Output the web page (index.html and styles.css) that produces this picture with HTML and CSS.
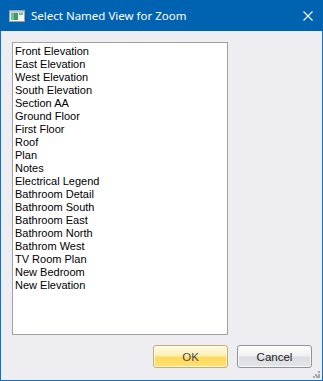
FILE: index.html
```html
<!DOCTYPE html>
<html lang="en">
<head>
  <meta charset="UTF-8">
  <title>Select Named View for Zoom</title>
  <link rel="stylesheet" href="styles.css">
</head>
<body>

<div class="dialog">
  <div class="titlebar">
    <svg class="app-icon" width="16" height="12" viewBox="0 0 16 12">
      <rect x="0.5" y="0.5" width="15" height="11" fill="#f4f4f4" stroke="#9aa3a8"/>
      <rect x="1" y="1" width="14" height="2" fill="#c9ced2"/>
      <rect x="2" y="3" width="7" height="7" fill="#3f9a6a"/>
      <rect x="2" y="3" width="3" height="7" fill="#6cbf8e"/>
      <rect x="10" y="3" width="4" height="2" fill="#7fb79a"/>
    </svg>
    <span class="title">Select Named View for Zoom</span>
    <svg class="close" width="10" height="10" viewBox="0 0 10 10">
      <path d="M0.5 0.5 L9.5 9.5 M9.5 0.5 L0.5 9.5" stroke="#fff" stroke-width="1.1"/>
    </svg>
  </div>

  <div class="content">
    <ul class="listbox">
      <li>Front Elevation</li>
      <li>East Elevation</li>
      <li>West Elevation</li>
      <li>South Elevation</li>
      <li>Section AA</li>
      <li>Ground Floor</li>
      <li>First Floor</li>
      <li>Roof</li>
      <li>Plan</li>
      <li>Notes</li>
      <li>Electrical Legend</li>
      <li>Bathroom Detail</li>
      <li>Bathroom South</li>
      <li>Bathroom East</li>
      <li>Bathroom North</li>
      <li>Bathrom West</li>
      <li>TV Room Plan</li>
      <li>New Bedroom</li>
      <li>New Elevation</li>
    </ul>

    <div class="buttons">
      <button class="btn btn-ok">OK</button>
      <button class="btn">Cancel</button>
    </div>
  </div>

  <svg class="grip" width="7" height="7" viewBox="0 0 7 7">
    <rect x="5" y="0" width="2" height="2" fill="#a6a6ad"/>
    <rect x="2" y="3" width="2" height="2" fill="#a6a6ad"/>
    <rect x="5" y="3" width="2" height="2" fill="#a6a6ad"/>
    <rect x="0" y="5" width="2" height="2" fill="#a6a6ad"/>
    <rect x="3" y="5" width="2" height="2" fill="#a6a6ad"/>
    <rect x="5" y="5" width="2" height="2" fill="#a6a6ad"/>
  </svg>
</div>

</body>
</html>
```

FILE: styles.css
```css
body {
  margin: 0;
  padding: 0;
  background: #eeedf2;
  font-family: "Liberation Sans", Arial, sans-serif;
}

.dialog {
  position: relative;
  width: 323px;
  height: 381px;
  box-sizing: border-box;
  border: 1px solid #1170c4;
  border-top: none;
  background: #eeedf2;
  display: flex;
  flex-direction: column;
}

.titlebar {
  height: 31px;
  margin: 0 -1px;
  background: #0063b1;
  display: flex;
  align-items: center;
  padding: 0 0 0 9px;
  color: #fff;
  flex-shrink: 0;
}

.app-icon {
  display: block;
}

.title {
  margin-left: 6px;
  font-family: "Noto Sans", "Open Sans", sans-serif;
  font-size: 11.5px;
  flex: 1;
}

.close {
  display: block;
  margin-right: 10px;
}

.content {
  flex: 1;
  display: flex;
  flex-direction: column;
  padding: 11px 10px 0 11px;
}

.listbox {
  width: 216px;
  height: 293px;
  box-sizing: border-box;
  margin: 0;
  padding: 2px 2px 0;
  list-style: none;
  background: #fff;
  border: 1px solid #a0a0a5;
  font-size: 11px;
  line-height: 13px;
  color: #000;
}

.buttons {
  display: flex;
  justify-content: flex-end;
  gap: 9px;
  margin-top: 10px;
}

.btn {
  width: 75px;
  height: 23px;
  padding: 0;
  font-family: "Liberation Sans", Arial, sans-serif;
  font-size: 11.5px;
  color: #1a1a1a;
  border: 1px solid #8f949b;
  border-radius: 3px;
  background: linear-gradient(to bottom, #fcfcfc 0%, #f1f1f3 45%, #dcdde2 55%, #e4e5e9 100%);
  box-shadow: inset 0 0 0 1px rgba(255, 255, 255, 0.7);
}

.btn-ok {
  color: #4a4a4a;
  border-color: #c9ad6a;
  background: linear-gradient(to bottom, #fffbe3 0%, #fff0b4 45%, #ffd95a 55%, #ffe07a 100%);
}

.grip {
  position: absolute;
  right: 2px;
  bottom: 2px;
}
```
